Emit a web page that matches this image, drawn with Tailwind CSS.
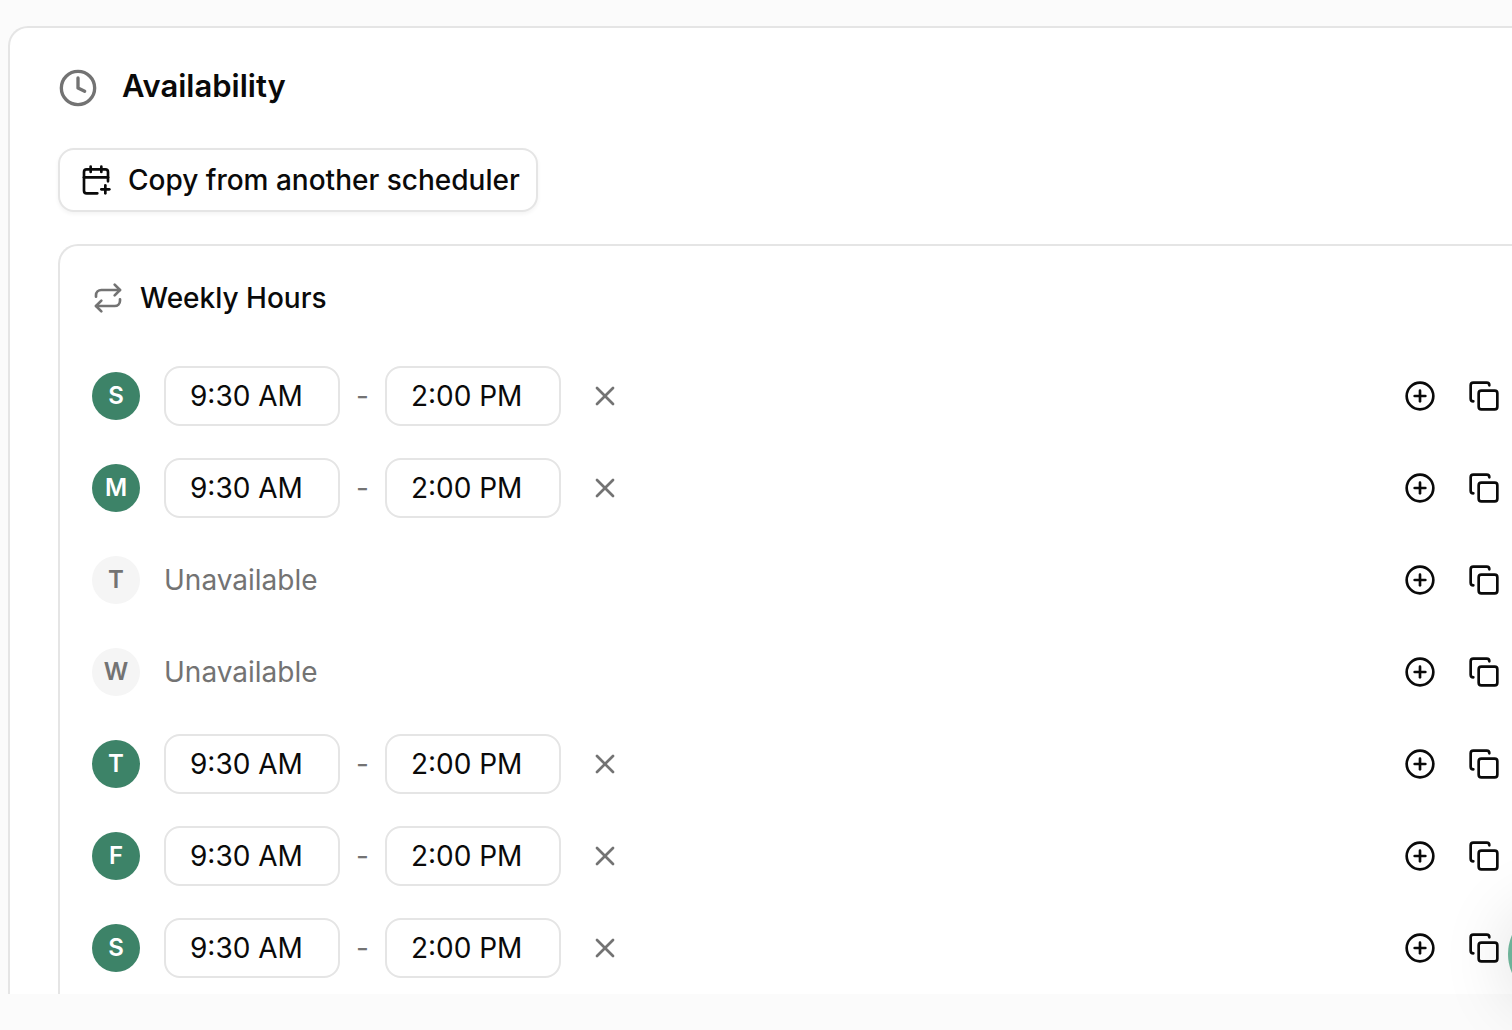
<!DOCTYPE html>
<html lang="en">
<head>
  <meta charset="UTF-8" />
  <meta name="viewport" content="width=device-width, initial-scale=1.0" />
  <title>Availability</title>
  <script src="https://cdn.jsdelivr.net/npm/@tailwindcss/browser@4"></script>
</head>
<body class="min-h-screen overflow-x-hidden bg-[#fbfbfb] pt-[26px] pl-2 font-['Inter',sans-serif] text-[28px] leading-10 text-neutral-950">

  <!-- Availability card -->
  <main class="rounded-tl-[20px] border-t-2 border-l-2 border-neutral-200 bg-white pt-10 pl-12">
    <div class="flex items-start gap-6">
      <svg class="size-10 text-neutral-500" viewBox="0 0 24 24" fill="none" stroke="currentColor" stroke-width="2" stroke-linecap="round" stroke-linejoin="round">
        <circle cx="12" cy="12" r="10" />
        <path d="M12 6v6l4 2" />
      </svg>
      <h1 class="text-[31px] leading-9 font-semibold">Availability</h1>
    </div>

    <button type="button" class="mt-10 flex h-16 items-center gap-4 rounded-2xl border-2 border-neutral-200 bg-white pr-4 pl-5 font-medium shadow-[0_2px_4px_rgba(0,0,0,0.05)]">
      <svg class="size-8" viewBox="0 0 24 24" fill="none" stroke="currentColor" stroke-width="2" stroke-linecap="round" stroke-linejoin="round">
        <path d="M8 2v4" />
        <path d="M16 2v4" />
        <path d="M21 13V6a2 2 0 0 0-2-2H5a2 2 0 0 0-2 2v14a2 2 0 0 0 2 2h8" />
        <path d="M3 10h18" />
        <path d="M16 19h6" />
        <path d="M19 16v6" />
      </svg>
      Copy from another scheduler
    </button>

    <!-- Weekly hours -->
    <section class="mt-8 rounded-tl-[20px] border-t-2 border-l-2 border-neutral-200 pt-8 pr-3 pb-4 pl-8">
      <div class="flex items-center gap-4">
        <svg class="size-8 text-neutral-500" viewBox="0 0 24 24" fill="none" stroke="currentColor" stroke-width="2" stroke-linecap="round" stroke-linejoin="round">
          <path d="m17 2 4 4-4 4" />
          <path d="M3 11v-1a4 4 0 0 1 4-4h14" />
          <path d="m7 22-4-4 4-4" />
          <path d="M21 13v1a4 4 0 0 1-4 4H3" />
        </svg>
        <h2 class="font-medium">Weekly Hours</h2>
      </div>
      <ul id="days" class="mt-12 flex flex-col gap-8"></ul>
    </section>
  </main>

  <!-- Chat launcher -->
  <button type="button" aria-label="Open chat" class="fixed -right-[92px] bottom-7 size-24 rounded-full bg-[#6db298] shadow-[0_4px_72px_rgba(0,0,0,0.14)]"></button>

  <script>
    const days = [
      { name: "Sunday", start: "9:30 AM", end: "2:00 PM" },
      { name: "Monday", start: "9:30 AM", end: "2:00 PM" },
      { name: "Tuesday" },
      { name: "Wednesday" },
      { name: "Thursday", start: "9:30 AM", end: "2:00 PM" },
      { name: "Friday", start: "9:30 AM", end: "2:00 PM" },
      { name: "Saturday", start: "9:30 AM", end: "2:00 PM" },
    ];

    const icon = (paths) => `
      <svg class="size-8" viewBox="0 0 24 24" fill="none" stroke="currentColor" stroke-width="2" stroke-linecap="round" stroke-linejoin="round">${paths}</svg>`;

    const timeInput = (label, value) => `
      <input type="text" aria-label="${label}" value="${value}" class="h-[60px] w-44 rounded-2xl border-2 border-neutral-200 bg-white px-6" />`;

    const hours = (day) => day.start
      ? `<div class="flex items-center gap-4">
          ${timeInput(day.name + " start", day.start)}
          <span class="text-neutral-500">-</span>
          ${timeInput(day.name + " end", day.end)}
          <button type="button" aria-label="Remove ${day.name} hours" class="p-3 text-neutral-500">${icon('<path d="M18 6 6 18" /><path d="m6 6 12 12" />')}</button>
        </div>`
      : `<span class="text-neutral-500">Unavailable</span>`;

    document.getElementById("days").innerHTML = days.map(day => `
      <li class="flex h-[60px] items-center gap-6">
        <button type="button" aria-label="Toggle ${day.name}" class="size-12 rounded-full text-2xl font-semibold ${day.start ? "bg-[#3d8368] text-white" : "bg-neutral-100 text-neutral-500"}">${day.name[0]}</button>
        ${hours(day)}
        <div class="ml-auto flex gap-8">
          <button type="button" aria-label="Add ${day.name} hours">${icon('<circle cx="12" cy="12" r="10" /><path d="M8 12h8" /><path d="M12 8v8" />')}</button>
          <button type="button" aria-label="Copy ${day.name} hours">${icon('<rect width="14" height="14" x="8" y="8" rx="2" ry="2" /><path d="M4 16c-1.1 0-2-.9-2-2V4c0-1.1.9-2 2-2h10c1.1 0 2 .9 2 2" />')}</button>
        </div>
      </li>
    `).join("");
  </script>
</body>
</html>
